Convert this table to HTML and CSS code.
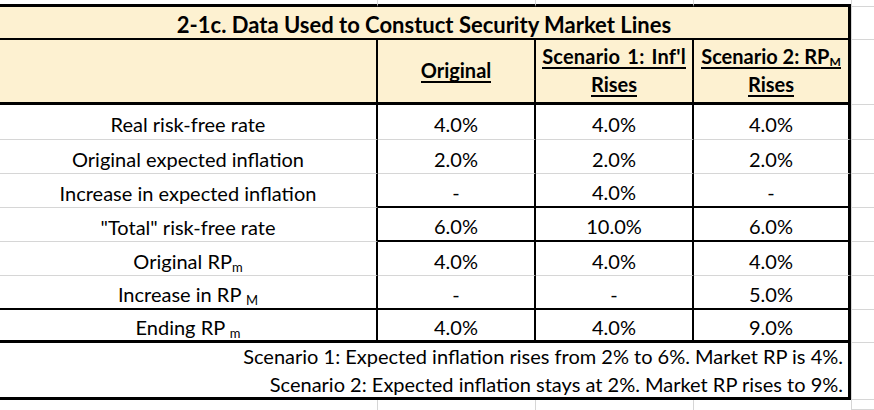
FILE: index.html
```html
<!DOCTYPE html>
<html lang="en">
<head>
<meta charset="utf-8">
<title>2-1c. Data Used to Constuct Security Market Lines</title>
<link rel="stylesheet" href="styles.css">
</head>
<body>
<div class="sheet">
  <div class="strip top"></div>
  <div class="strip top"></div>
  <div class="strip top"></div>
  <div class="strip top last"></div>
  <div class="margin"></div>

  <div class="title">2-1c. Data Used to Constuct Security Market Lines</div>
  <div class="margin"></div>

  <div class="head lbl b-thick"></div>
  <div class="head val b-thick"><span class="u">Original</span></div>
  <div class="head val b-thick"><span class="u wide">Scenario 1: Inf'l</span><span class="u">Rises</span></div>
  <div class="head val end b-thick"><span class="u">Scenario 2: RP<span class="hsub">M</span></span><span class="u">Rises</span></div>
  <div class="margin"></div>

  <div class="cell lbl b-grid">Real risk-free rate</div>
  <div class="cell val b-grid">4.0%</div>
  <div class="cell val b-grid">4.0%</div>
  <div class="cell val end b-grid">4.0%</div>
  <div class="margin"></div>

  <div class="cell lbl b-grid">Original expected inflation</div>
  <div class="cell val b-grid">2.0%</div>
  <div class="cell val b-grid">2.0%</div>
  <div class="cell val end b-grid">2.0%</div>
  <div class="margin"></div>

  <div class="cell lbl b-grid">Increase in expected inflation</div>
  <div class="cell val b-thin">-</div>
  <div class="cell val b-thin">4.0%</div>
  <div class="cell val end b-thin">-</div>
  <div class="margin"></div>

  <div class="cell lbl b-grid">"Total" risk-free rate</div>
  <div class="cell val b-thin">6.0%</div>
  <div class="cell val b-thin">10.0%</div>
  <div class="cell val end b-thin">6.0%</div>
  <div class="margin"></div>

  <div class="cell lbl b-grid">Original RP<span class="sub">m</span></div>
  <div class="cell val b-grid">4.0%</div>
  <div class="cell val b-grid">4.0%</div>
  <div class="cell val end b-grid">4.0%</div>
  <div class="margin"></div>

  <div class="cell lbl b-thin">Increase in RP&nbsp;<span class="sub">M</span></div>
  <div class="cell val b-thin">-</div>
  <div class="cell val b-thin">-</div>
  <div class="cell val end b-thin">5.0%</div>
  <div class="margin"></div>

  <div class="cell lbl b-thick">Ending RP&nbsp;<span class="sub">m</span></div>
  <div class="cell val b-thick">4.0%</div>
  <div class="cell val b-thick">4.0%</div>
  <div class="cell val end b-thick">9.0%</div>
  <div class="margin"></div>

  <div class="foot">
    <p class="note">Scenario 1: Expected inflation rises from 2% to 6%. Market RP is 4%.</p>
    <p class="note">Scenario 2: Expected inflation stays at 2%. Market RP rises to 9%.</p>
  </div>
  <div class="margin"></div>

  <div class="strip"></div>
  <div class="strip"></div>
  <div class="strip"></div>
  <div class="strip last"></div>
  <div class="margin"></div>
</div>
</body>
</html>
```

FILE: styles.css
```css
* {
  box-sizing: border-box;
}

html, body {
  margin: 0;
  padding: 0;
  background: #ffffff;
}

body {
  font-family: Lato, "Open Sans", Arial, sans-serif;
  color: #000000;
  font-size: 20px;
}

.sheet {
  display: grid;
  grid-template-columns: 378px 158px 158px 157px 1fr;
  grid-template-rows: 7px 33px 65px 35px 34px 34px 34px 34px 34px 33px 57px 10px;
  width: 874px;
  height: 410px;
  overflow: hidden;
}

/* spreadsheet gridlines outside the table */
.strip {
  border-right: 1px solid #d6d6d6;
}

.strip.top {
  border-bottom: 3px solid #000;
}

.strip.last {
  border-right: none;
}

.margin {
  border-left: 1px solid #d6d6d6;
  border-bottom: 1px solid #d6d6d6;
}

/* title */
.title {
  grid-column: 1 / span 4;
  background: #fdf1d1;
  border-bottom: 2px solid #000;
  border-right: 3px solid #000;
  display: flex;
  align-items: center;
  justify-content: center;
  padding: 3px 0 0 0;
  font-weight: 700;
  font-size: 22px;
  white-space: nowrap;
}

/* header */
.head {
  background: #fdf1d1;
  display: flex;
  flex-direction: column;
  align-items: center;
  justify-content: center;
  font-weight: 700;
  font-size: 20px;
  white-space: nowrap;
}

.u {
  display: inline-block;
  line-height: 22px;
  border-bottom: 2px solid #000;
  margin: 2px 0;
}

.u.wide {
  word-spacing: 2px;
  letter-spacing: 0.2px;
}

.hsub {
  font-size: 12px;
  line-height: 0;
  vertical-align: -2px;
}

/* body cells */
.cell {
  display: flex;
  align-items: center;
  justify-content: center;
  padding-top: 4px;
  white-space: nowrap;
}

.lbl {
  border-right: 2px solid #000;
}

.val {
  border-right: 2px solid #000;
}

.val.end {
  border-right: 3px solid #000;
}

.b-grid {
  border-bottom: 1px solid #d6d6d6;
}

.b-thin {
  border-bottom: 2px solid #000;
}

.b-thick {
  border-bottom: 3px solid #000;
}

.sub {
  font-size: 13px;
  line-height: 0;
  position: relative;
  top: 6px;
}

/* footnotes */
.foot {
  grid-column: 1 / span 4;
  border-bottom: 3px solid #000;
  border-right: 3px solid #000;
  display: flex;
  flex-direction: column;
  align-items: flex-end;
  justify-content: center;
  padding-right: 5px;
}

.note {
  margin: 0;
  line-height: 28px;
  white-space: nowrap;
}
```
